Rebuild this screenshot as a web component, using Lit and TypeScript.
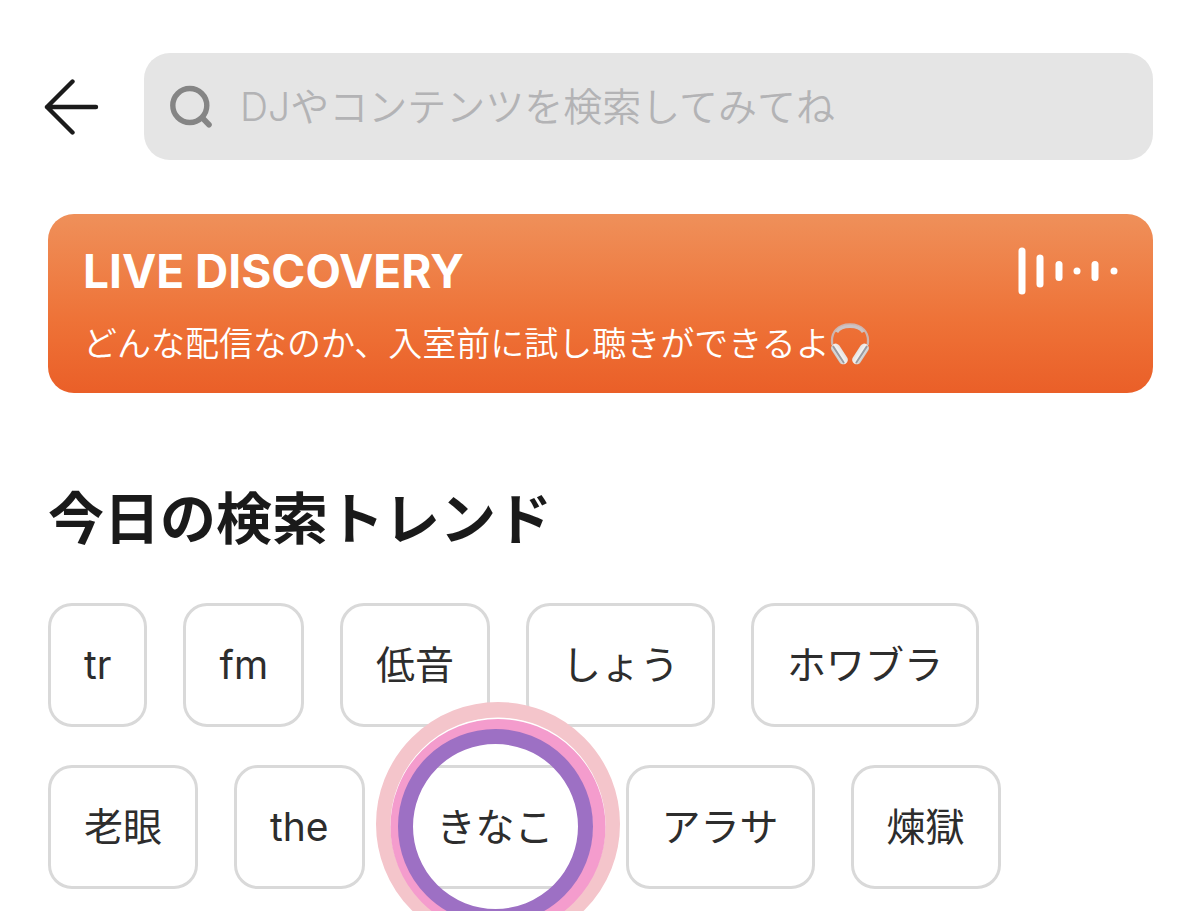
import { LitElement, html, css, svg } from "lit";
import { customElement, property, state } from "lit/decorators.js";

@customElement("search-header")
class SearchHeader extends LitElement {
  @state() private query = "";

  static styles = css`
    :host { display: block; }
    .bar { display: flex; align-items: center; gap: 44px; }
    .back {
      flex: none; display: flex; padding: 0; border: 0;
      background: none; cursor: pointer;
    }
    .field {
      flex: 1; min-width: 0; display: flex; align-items: center; gap: 26px;
      box-sizing: border-box; height: 107px; padding: 0 24px;
      border-radius: 26px; background: #e5e5e5;
    }
    .icon { flex: none; }
    .input {
      flex: 1; min-width: 0; padding: 0; border: 0; outline: 0;
      background: none; color: #222; font: inherit;
      font-size: 39px; line-height: 56px; font-weight: 350;
    }
    .input::placeholder { color: #b3b3b5; opacity: 1; }
  `;

  render() {
    return html`
      <header class="bar">
        <button class="back" aria-label="戻る">
          <svg width="56" height="56" viewBox="0 0 56 56" fill="none" stroke="#1b1b1b"
            stroke-width="4.4" stroke-linecap="round" stroke-linejoin="round">
            <path d="M28.5 2.5 L3 28 L28.5 53.5 M3 28 H52" />
          </svg>
        </button>
        <label class="field">
          <svg class="icon" width="46" height="46" viewBox="0 0 46 46" fill="none" stroke="#858585">
            <circle cx="21.8" cy="21.5" r="17" stroke-width="5.4" />
            <path d="M34.5 34 L41 40.8" stroke-width="5.6" stroke-linecap="round" />
          </svg>
          <input class="input" type="text" aria-label="検索"
            placeholder="DJやコンテンツを検索してみてね"
            .value=${this.query}
            @input=${(e: Event) => (this.query = (e.target as HTMLInputElement).value)} />
        </label>
      </header>
    `;
  }
}

@customElement("discovery-banner")
class DiscoveryBanner extends LitElement {
  static styles = css`
    :host { display: block; }
    .banner {
      display: grid; grid-template-columns: 1fr auto; row-gap: 17px;
      box-sizing: border-box; padding: 27px 33px 24px 35px;
      border-radius: 26px; color: #fff; text-decoration: none;
      background: linear-gradient(#ef905a, #ee7237 60%, #ea5f28);
    }
    .title { margin: 0; font-size: 46px; line-height: 60px; font-weight: 700; }
    .wave { align-self: center; }
    .text {
      grid-column: 1 / -1; display: flex; align-items: center; margin: 0;
      font-size: 34px; line-height: 51px; font-weight: 350;
    }
    .phones { flex: none; }
  `;

  private bars = [
    [4, 47], [22, 33], [41, 20], [59, 7], [77, 20], [96, 7],
  ];

  render() {
    return html`
      <a class="banner" href="#discovery">
        <h2 class="title">LIVE DISCOVERY</h2>
        <svg class="wave" width="102" height="48" viewBox="0 0 102 48" fill="#fff" aria-hidden="true">
          ${this.bars.map(([x, h]) => svg`
            <rect x=${x - 3.5} y=${24 - h / 2} width="7" height=${h} rx="3.5" />`)}
        </svg>
        <p class="text">
          どんな配信なのか、入室前に試し聴きができるよ
          <svg class="phones" width="40" height="46" viewBox="0 0 42 46" role="img" aria-label="ヘッドホン">
            <defs>
              <linearGradient id="cup" x1="0" x2="1">
                <stop offset="0" stop-color="#c9c9c9" />
                <stop offset=".5" stop-color="#f5f3f1" />
                <stop offset="1" stop-color="#e4e1e0" />
              </linearGradient>
            </defs>
            <path d="M2.5 24 C0 10 9 2.5 21 2.5 S42 10 39.5 24" fill="none" stroke="#cdb5af" stroke-width="2.4" />
            <path d="M7 10.5 C12 2.5 30 2.5 35 10.5" fill="none" stroke="#cdc4c4" stroke-width="3.6" />
            <g>
              <rect x="5.5" y="21.5" width="9.5" height="24" rx="4.5" fill="url(#cup)" transform="rotate(-33 10 34)" />
              <rect x="8" y="22.5" width="2" height="22" rx="1" fill="#9a9ba1" transform="rotate(-33 10 34)" />
            </g>
            <g transform="matrix(-1 0 0 1 42 0)">
              <rect x="5.5" y="21.5" width="9.5" height="24" rx="4.5" fill="url(#cup)" transform="rotate(-33 10 34)" />
              <rect x="8" y="22.5" width="2" height="22" rx="1" fill="#9a9ba1" transform="rotate(-33 10 34)" />
            </g>
          </svg>
        </p>
      </a>
    `;
  }
}

@customElement("trend-chip")
class TrendChip extends LitElement {
  @property() label = "";
  @property({ type: Boolean }) marked = false;

  static styles = css`
    :host { display: block; position: relative; }
    .chip {
      display: block; box-sizing: border-box; padding: 30px 33px;
      border: 3px solid #d9d9d9; border-radius: 24px; background: #fff;
      color: #2d2d2d; font: inherit; font-size: 39px; line-height: 58px;
      white-space: nowrap; cursor: pointer;
    }
    .rings {
      position: absolute; top: 50%; left: 50%;
      transform: translate(-50%, -50%); pointer-events: none;
    }
  `;

  render() {
    return html`
      <button class="chip">${this.label}</button>
      ${this.marked
        ? html`<svg class="rings" width="256" height="256" viewBox="0 0 256 256" fill="none" aria-hidden="true">
            <circle cx="131" cy="125" r="114" stroke="#f4c5cb" stroke-width="16" />
            <circle cx="131" cy="126" r="106.5" stroke="#fff" stroke-width="2" />
            <circle cx="131" cy="127.5" r="101" stroke="#f49ccd" stroke-width="13" />
            <circle cx="128.5" cy="127.5" r="90" stroke="#9d70c4" stroke-width="15" />
          </svg>`
        : ""}
    `;
  }
}

@customElement("app-root")
class AppRoot extends LitElement {
  static styles = css`
    :host {
      display: block; box-sizing: border-box; min-height: 100vh;
      padding: 53px 47px 22px 44px; overflow: clip; background: #fff;
      font-family: Inter, "Noto Sans CJK JP", sans-serif;
    }
    .content { display: flex; flex-direction: column; padding: 54px 0 0 4px; }
    .heading {
      margin: 87px 0 45px; color: #1a1a1a;
      font-size: 56px; line-height: 78px; font-weight: 700;
    }
    .trends {
      display: flex; flex-wrap: wrap; gap: 38px 36px;
      margin: 0; padding: 0; list-style: none;
    }
  `;

  private trends = ["tr", "fm", "低音", "しょう", "ホワブラ", "老眼", "the", "きなこ", "アラサ", "煉獄"];

  render() {
    return html`
      <search-header></search-header>
      <main class="content">
        <discovery-banner></discovery-banner>
        <h1 class="heading">今日の検索トレンド</h1>
        <ul class="trends">
          ${this.trends.map((t) => html`
            <li><trend-chip .label=${t} .marked=${t === "きなこ"}></trend-chip></li>`)}
        </ul>
      </main>
    `;
  }
}
